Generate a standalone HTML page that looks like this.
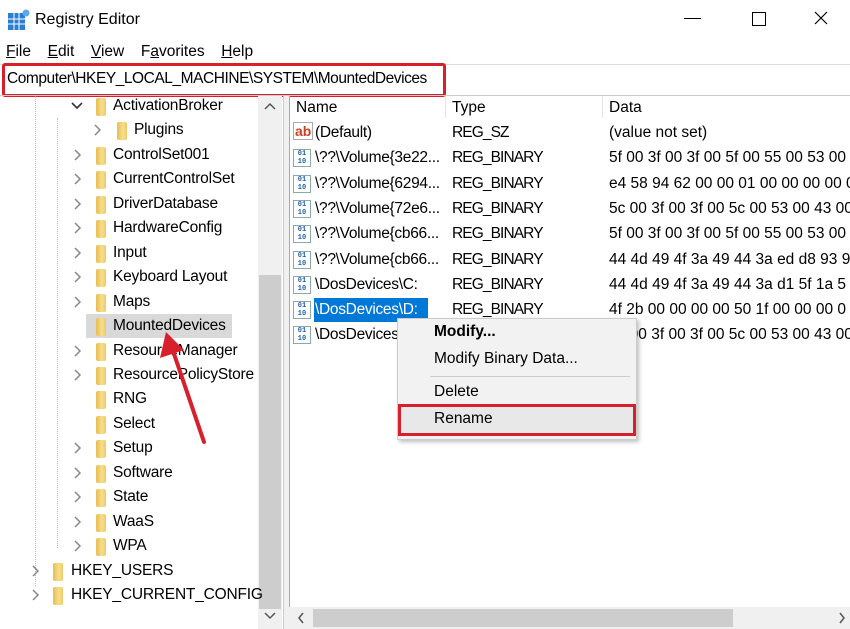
<!DOCTYPE html><html><head><style>
body{margin:0;width:850px;height:629px;overflow:hidden;background:#fff;font-family:"Liberation Sans",sans-serif;font-size:15.5px;color:#000;position:relative}
.a{position:absolute;white-space:nowrap;line-height:20px}
.f{position:absolute;width:10px;height:18px;border-radius:2px;background:linear-gradient(90deg,#e6bd52,#f8de8c 60%,#ecc96a)}
.ic{position:absolute;width:18px;height:18px;border:1px solid #8aa;background:#fff;font:bold 7px "Liberation Mono",monospace;color:#2060b0;line-height:8px;text-align:center;box-sizing:border-box}
.t{letter-spacing:-0.9px}
</style></head><body>
<svg style="position:absolute;left:8px;top:9px" width="22" height="22"><rect x="0" y="4" width="17" height="17" fill="#2a7fd4"/><g stroke="#fff" stroke-width="1"><line x1="0" y1="10" x2="17" y2="10"/><line x1="0" y1="15" x2="17" y2="15"/><line x1="6" y1="4" x2="6" y2="21"/><line x1="11" y1="4" x2="11" y2="21"/></g><circle cx="18" cy="4" r="3.5" fill="#5fa8e8"/></svg>
<div class="a" style="left:35px;top:10px;font-size:16px">Registry Editor</div>
<div style="position:absolute;left:684px;top:18px;width:17px;height:1px;background:#000"></div>
<div style="position:absolute;left:752px;top:12px;width:12px;height:12px;border:1px solid #000"></div>
<svg style="position:absolute;left:814px;top:11px" width="14" height="14"><path d="M1 1L13 13M13 1L1 13" stroke="#000" stroke-width="1.2"/></svg>
<div class="a" style="left:6px;top:42px;font-size:15.5px;word-spacing:4px"><u>F</u>ile &nbsp;<u>E</u>dit &nbsp;<u>V</u>iew &nbsp;F<u>a</u>vorites &nbsp;<u>H</u>elp</div>
<div style="position:absolute;left:0;top:64px;width:850px;height:1px;background:#ddd"></div>
<div style="position:absolute;left:2px;top:63px;width:438px;height:28px;border:3px solid #d8202c;border-radius:3px"></div>
<div class="a" style="left:7px;top:69px;font-size:15.5px;letter-spacing:-0.45px">Computer\HKEY_LOCAL_MACHINE\SYSTEM\MountedDevices</div>
<div style="position:absolute;left:0;top:95px;width:850px;height:1px;background:#ccc"></div>
<div style="position:absolute;left:258px;top:96px;width:24px;height:533px;background:#f0f0f0"></div>
<div style="position:absolute;left:259px;top:275px;width:22px;height:334px;background:#cdcdcd"></div>
<svg style="position:absolute;left:264px;top:102px" width="12" height="8"><path d="M1 7L6 2L11 7" stroke="#555" fill="none" stroke-width="1.5"/></svg>
<svg style="position:absolute;left:264px;top:612px" width="12" height="8"><path d="M1 1L6 6L11 1" stroke="#555" fill="none" stroke-width="1.5"/></svg>
<div style="position:absolute;left:283px;top:96px;width:5px;height:533px;background:#f0f0f0;border-left:1px solid #ccc;border-right:1px solid #aaa"></div>
<div style="position:absolute;left:35px;top:96px;height:490px;border-left:1px dotted #bbb"></div>
<div style="position:absolute;left:57px;top:118px;height:430px;border-left:1px dotted #bbb"></div>
<div style="position:absolute;left:86px;top:314px;width:146px;height:24px;background:#d9d9d9"></div>
<div id="tree"></div>
<div class="a" style="left:296px;top:98px">Name</div>
<div style="position:absolute;left:445px;top:96px;width:1px;height:22px;background:#e5e5e5"></div>
<div class="a" style="left:452px;top:98px">Type</div>
<div style="position:absolute;left:602px;top:96px;width:1px;height:22px;background:#e5e5e5"></div>
<div class="a" style="left:609px;top:98px">Data</div>
<div style="position:absolute;left:314px;top:298px;width:114px;height:24px;background:#0078d7"></div>
<div id="list"></div>
<div style="position:absolute;left:289px;top:607px;width:561px;height:22px;background:#f0f0f0"></div>
<div style="position:absolute;left:313px;top:609px;width:420px;height:18px;background:#cdcdcd"></div>
<svg style="position:absolute;left:297px;top:612px" width="8" height="12"><path d="M6 1L2 6L6 11" stroke="#555" fill="none" stroke-width="1.5"/></svg>
<svg style="position:absolute;left:838px;top:612px" width="8" height="12"><path d="M2 1L6 6L2 11" stroke="#555" fill="none" stroke-width="1.5"/></svg>
<div style="position:absolute;left:397px;top:318px;width:238px;height:120px;background:#f2f2f2;border:1px solid #ccc;box-shadow:2px 2px 4px rgba(0,0,0,.25)"></div>
<div class="a" style="left:434px;top:322px;font-weight:bold">Modify...</div>
<div class="a" style="left:434px;top:349px">Modify Binary Data...</div>
<div style="position:absolute;left:430px;top:376px;width:200px;height:1px;background:#ccc"></div>
<div class="a" style="left:434px;top:382px">Delete</div>
<div style="position:absolute;left:398px;top:404px;width:232px;height:26px;border:3px solid #d8202c;background:#e8e8e8"></div>
<div class="a" style="left:434px;top:409px">Rename</div>
<svg style="position:absolute;left:0;top:0" width="850" height="629"><line x1="204" y1="442" x2="172" y2="348" stroke="#d8202c" stroke-width="4" stroke-linecap="round"/><polygon points="166,332 160,358 184,350" fill="#d8202c"/></svg>
<script>
var t=[["v",77,96,113,"ActivationBroker"],[">",97,117,134,"Plugins"],[">",77,96,113,"ControlSet001"],[">",77,96,113,"CurrentControlSet"],[">",77,96,113,"DriverDatabase"],[">",77,96,113,"HardwareConfig"],[">",77,96,113,"Input"],[">",77,96,113,"Keyboard Layout"],[">",77,96,113,"Maps"],["",77,96,113,"MountedDevices"],[">",77,96,113,"ResourceManager"],[">",77,96,113,"ResourcePolicyStore"],["",77,96,113,"RNG"],["",77,96,113,"Select"],[">",77,96,113,"Setup"],[">",77,96,113,"Software"],[">",77,96,113,"State"],[">",77,96,113,"WaaS"],[">",77,96,113,"WPA"],[">",35,53,71,"HKEY_USERS"],[">",35,53,71,"HKEY_CURRENT_CONFIG"]];
var h="";t.forEach(function(r,i){var y=96+i*24.45;
if(r[0]=="v")h+='<svg style="position:absolute;left:'+(r[1]-6)+'px;top:'+(y+6)+'px" width="12" height="8"><path d="M1 1L6 6L11 1" stroke="#333" fill="none" stroke-width="1.6"/></svg>';
else if(r[0])h+='<svg style="position:absolute;left:'+(r[1]-3)+'px;top:'+(y+4)+'px" width="8" height="12"><path d="M1 1L6 6L1 11" stroke="#888" fill="none" stroke-width="1.5"/></svg>';
h+='<div class="f" style="left:'+r[2]+'px;top:'+(y+2)+'px"></div><div class="a" style="left:'+r[3]+'px;top:'+y+'px;letter-spacing:-0.2px">'+r[4]+'</div>';});
document.getElementById("tree").innerHTML=h;
var l=[["ab","(Default)","REG_SZ","(value not set)"],["b","\\??\\Volume{3e22...","REG_BINARY","5f 00 3f 00 3f 00 5f 00 55 00 53 00"],["b","\\??\\Volume{6294...","REG_BINARY","e4 58 94 62 00 00 01 00 00 00 00 00"],["b","\\??\\Volume{72e6...","REG_BINARY","5c 00 3f 00 3f 00 5c 00 53 00 43 00"],["b","\\??\\Volume{cb66...","REG_BINARY","5f 00 3f 00 3f 00 5f 00 55 00 53 00"],["b","\\??\\Volume{cb66...","REG_BINARY","44 4d 49 4f 3a 49 44 3a ed d8 93 9"],["b","\\DosDevices\\C:","REG_BINARY","44 4d 49 4f 3a 49 44 3a d1 5f 1a 5"],["b","\\DosDevices\\D:","REG_BINARY","4f 2b 00 00 00 00 50 1f 00 00 00 0"],["b","\\DosDevices\\E:","REG_BINARY","5c 00 3f 00 3f 00 5c 00 53 00 43 00"]];
h="";l.forEach(function(r,i){var y=123+i*25.3;
h+=r[0]=="ab"?'<div class="a" style="left:293px;top:'+(y-1)+'px;color:#d04020;font-weight:bold;font-size:14px;border:1px solid #aaa;line-height:16px;padding:0 1px">ab</div>':'<div class="ic" style="left:293px;top:'+(y+1)+'px">01<br>10</div>';
h+='<div class="a" style="left:315px;top:'+y+'px;letter-spacing:-0.3px;'+(i==7?'color:#fff':'')+'">'+r[1]+'</div><div class="a t" style="left:452px;top:'+y+'px">'+r[2]+'</div><div class="a" style="left:609px;top:'+y+'px">'+r[3]+'</div>';});
document.getElementById("list").innerHTML=h;
</script>
</body></html>
